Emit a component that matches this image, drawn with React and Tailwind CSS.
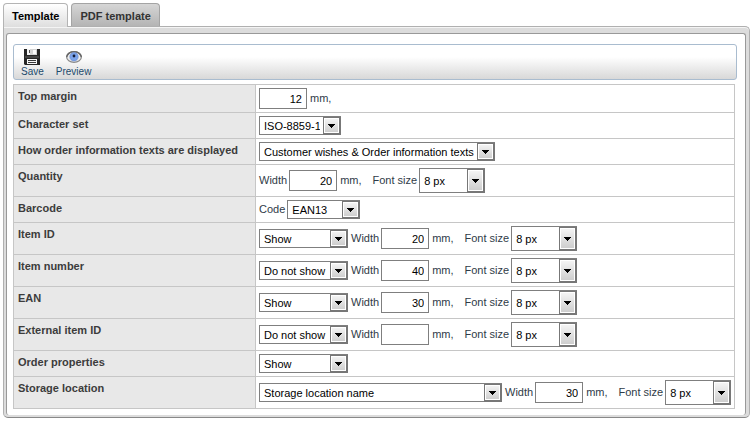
import React from "react";

const FONT = "font-['Liberation_Sans',Arial,sans-serif]";

function Select({ id, label, value, options, className }) {
  return (
    <span className={`relative inline-flex shrink-0 ${className}`}>
      <select
        id={id}
        aria-label={label}
        defaultValue={value}
        className="h-full w-full appearance-none rounded-none border border-[#7f7f7f] bg-white pr-5 pl-1 text-[11px] leading-4 text-black"
      >
        {(options || [value]).map((o) => (
          <option key={o}>{o}</option>
        ))}
      </select>
      <span className="pointer-events-none absolute top-px right-0 bottom-0 flex w-[18px] items-center justify-center border border-r-2 border-b-2 border-[#777] bg-linear-to-b from-[#f6f6f6] to-[#cccccc] pt-px shadow-[inset_0_0_0_1px_#fff]">
        <svg width="7" height="4" viewBox="0 0 7 4" fill="#000" shapeRendering="crispEdges" aria-hidden="true">
          <path d="M0 0h7v1H6v1H5v1H4v1H3V3H2V2H1V1H0z" />
        </svg>
      </span>
    </span>
  );
}

function Field({ id, label, name, value }) {
  return (
    <>
      <span className="flex items-center gap-[2px]">
        {label && <label htmlFor={id}>{label}</label>}
        <input
          id={id}
          type="text"
          aria-label={name}
          defaultValue={value}
          className="h-[21px] w-12 shrink-0 border border-[#7f7f7f] bg-white px-1 text-right text-[11px] text-black"
        />
      </span>
      <span>mm,</span>
    </>
  );
}

function FontSize({ id }) {
  return (
    <span className="ml-2 flex items-center gap-[2px]">
      <label htmlFor={id}>Font size</label>
      <Select id={id} value="8 px" options={["6 px", "8 px", "10 px", "12 px"]} className="h-[25px] w-[66px]" />
    </span>
  );
}

const SHOW = ["Show", "Do not show"];

function ShowRow({ id, name, show, width }) {
  return (
    <Row name={name}>
      <Select label={name} value={show} options={SHOW} className="h-[19px] w-[89px]" />
      <Field id={`${id}-width`} label="Width" value={width} />
      <FontSize id={`${id}-font`} />
    </Row>
  );
}

function Row({ name, children }) {
  return (
    <tr>
      <th scope="row" className="w-[242px] min-w-[242px] border border-[#c6c6c6] bg-[#e8e8e8] px-1 py-0 text-left align-top font-bold whitespace-nowrap text-[#3c3c3c]">
        <div className="pt-[3px] leading-4">{name}</div>
      </th>
      <td className="w-full border border-[#c6c6c6] bg-white p-[3px]">
        <div className="flex items-center gap-[3px] whitespace-nowrap">{children}</div>
      </td>
    </tr>
  );
}

function SaveIcon() {
  return (
    <svg width="16" height="16" viewBox="0 0 16 16" aria-hidden="true">
      <path d="M0 0h16v16H1l-1-1z" fill="#262626" />
      <path d="M3 0h10v6H3z" fill="#d4d4d4" />
      <path d="M3 0h3v6H3z" fill="#f4f4f4" />
      <path d="M9 1h3v4H9z" fill="#fafafa" />
      <path d="M5 1h1v3H5z" fill="#555" />
      <path d="M1 7h14v2H1z" fill="#444" />
      <path d="M3 10h10v5H3z" fill="#f6f6f6" />
      <path d="M4 11h8v1H4zM4 13h8v1H4z" fill="#3a3a3a" />
    </svg>
  );
}

function EyeIcon() {
  return (
    <svg width="16" height="16" viewBox="0 0 16 16" aria-hidden="true">
      <ellipse cx="8" cy="8" rx="7.4" ry="5.3" fill="#ededed" stroke="#8a8a8a" strokeWidth="1.200" />
      <path d="M.6 8C1.600 4.200 5 2.700 8 2.700S14.400 4.200 15.400 8" fill="none" stroke="#666" strokeWidth="1.400" />
      <circle cx="8" cy="7.800" r="4.200" fill="#7ba3ea" stroke="#5f84cc" strokeWidth=".6" />
      <circle cx="8" cy="7" r="1.400" fill="#141c38" />
    </svg>
  );
}

const TOOL = "flex flex-col items-center text-[10px] leading-[14px] text-[#1c4a6c]";

export default function App() {
  return (
    <main className={`${FONT} bg-white pt-[3px] pr-[2px] pb-[2px] pl-[3px] text-[11px] text-[#2f3b48]`}>
      <div role="tablist" className="relative flex items-start gap-[3px] font-bold">
        <button role="tab" aria-selected="true" className="-mb-px h-6 rounded-t-[4px] border border-b-0 border-[#b4b4b4] bg-linear-to-b from-white to-[#dedede] px-2 pt-[2px] text-black">
          Template
        </button>
        <button role="tab" aria-selected="false" className="h-[23px] rounded-t-[4px] border border-b-0 border-[#a4a4a4] bg-linear-to-b from-[#d6d6d6] to-[#b4b4b4] px-2 pt-[2px] text-[#333]">
          PDF template
        </button>
      </div>
      <section className="rounded-[5px] rounded-tl-none border border-[#b0b0b0] border-b-[#888] bg-[#dcdcdc] pt-[6px] pr-[3px] pb-[2px] pl-[2px] shadow-[inset_0_1px_0_#f4f4f4]">
        <div className="rounded-[3px] border border-b-0 border-[#999] bg-white pt-[10px] pr-[8px] pb-[6px] pl-[6px]">
          <div className="flex h-9 gap-3 rounded-[3px] border border-[#a9bccf] bg-linear-to-b from-white from-35% to-[#d8d8d8] px-[7px] pt-1">
            <button className={TOOL}>
              <SaveIcon />
              Save
            </button>
            <button className={TOOL}>
              <EyeIcon />
              Preview
            </button>
          </div>
          <div className="mt-1 mr-[2px]">
            <table className="w-full border-collapse">
              <tbody>
                <Row name="Top margin">
                  <Field id="top-margin" name="Top margin" value="12" />
                </Row>
                <Row name="Character set">
                  <Select label="Character set" value="ISO-8859-1" options={["ISO-8859-1", "UTF-8"]} className="h-[19px] w-[82px]" />
                </Row>
                <Row name="How order information texts are displayed">
                  <Select label="How order information texts are displayed" value="Customer wishes & Order information texts" className="h-[19px] w-[236px]" />
                </Row>
                <Row name="Quantity">
                  <Field id="quantity-width" label="Width" value="20" />
                  <FontSize id="quantity-font" />
                </Row>
                <Row name="Barcode">
                  <span className="flex items-center gap-[2px]">
                    <label htmlFor="barcode-code">Code</label>
                    <Select id="barcode-code" value="EAN13" className="h-[19px] w-[73px]" />
                  </span>
                </Row>
                <ShowRow id="item-id" name="Item ID" show="Show" width="20" />
                <ShowRow id="item-number" name="Item number" show="Do not show" width="40" />
                <ShowRow id="ean" name="EAN" show="Show" width="30" />
                <ShowRow id="external-id" name="External item ID" show="Do not show" width="" />
                <Row name="Order properties">
                  <Select label="Order properties" value="Show" options={SHOW} className="h-[19px] w-[89px]" />
                </Row>
                <Row name="Storage location">
                  <Select label="Storage location" value="Storage location name" className="h-[19px] w-[243px]" />
                  <Field id="storage-width" label="Width" value="30" />
                  <FontSize id="storage-font" />
                </Row>
              </tbody>
            </table>
          </div>
        </div>
      </section>
    </main>
  );
}
